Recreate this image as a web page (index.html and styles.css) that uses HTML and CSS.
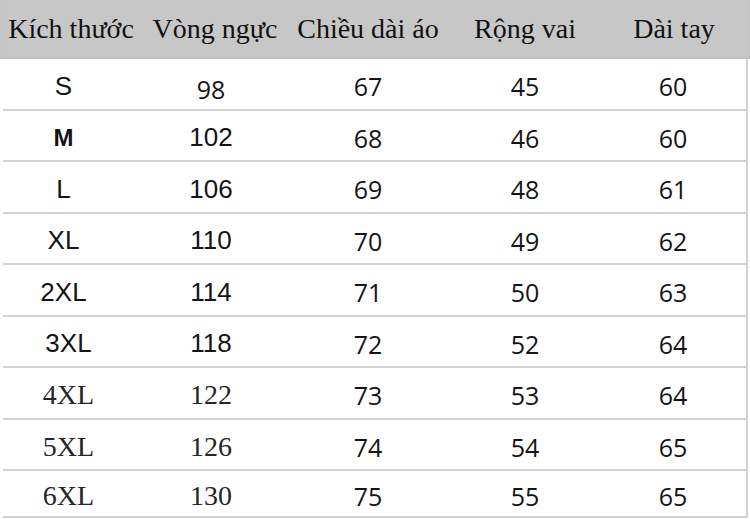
FILE: index.html
```html
<!DOCTYPE html>
<html lang="vi">
<head>
<meta charset="utf-8">
<title>Bảng kích thước</title>
<link rel="stylesheet" href="styles.css">
</head>
<body>
<div class="chart">
  <div class="head">
    <div class="hcell">Kích thước</div>
    <div class="hcell">Vòng ngực</div>
    <div class="hcell">Chiều dài áo</div>
    <div class="hcell">Rộng vai</div>
    <div class="hcell">Dài tay</div>
  </div>
  <div class="body">
    <div class="row">
      <div class="cell f-ar">S</div><div class="cell f-os low">98</div><div class="cell f-os">67</div><div class="cell f-os">45</div><div class="cell f-os">60</div>
    </div>
    <div class="row">
      <div class="cell f-ar bold">M</div><div class="cell f-ar">102</div><div class="cell f-os">68</div><div class="cell f-os">46</div><div class="cell f-os">60</div>
    </div>
    <div class="row">
      <div class="cell f-ar">L</div><div class="cell f-ar">106</div><div class="cell f-os">69</div><div class="cell f-os">48</div><div class="cell f-os">61</div>
    </div>
    <div class="row">
      <div class="cell f-ar">XL</div><div class="cell f-ar">110</div><div class="cell f-os">70</div><div class="cell f-os">49</div><div class="cell f-os">62</div>
    </div>
    <div class="row">
      <div class="cell f-ar">2XL</div><div class="cell f-ar">114</div><div class="cell f-os">71</div><div class="cell f-os">50</div><div class="cell f-os">63</div>
    </div>
    <div class="row">
      <div class="cell f-ar shift">3XL</div><div class="cell f-ar">118</div><div class="cell f-os">72</div><div class="cell f-os">52</div><div class="cell f-os">64</div>
    </div>
    <div class="row">
      <div class="cell f-so shift">4XL</div><div class="cell f-so">122</div><div class="cell f-os">73</div><div class="cell f-os">53</div><div class="cell f-os">64</div>
    </div>
    <div class="row">
      <div class="cell f-so shift">5XL</div><div class="cell f-so">126</div><div class="cell f-os">74</div><div class="cell f-os">54</div><div class="cell f-os">65</div>
    </div>
    <div class="row last">
      <div class="cell f-so shift">6XL</div><div class="cell f-so">130</div><div class="cell f-os">75</div><div class="cell f-os">55</div><div class="cell f-os">65</div>
    </div>
  </div>
</div>
</body>
</html>
```
FILE: styles.css
```css
html, body {
  margin: 0;
  padding: 0;
  background: #ffffff;
}
.chart {
  width: 750px;
  height: 519px;
  overflow: hidden;
  background: #ffffff;
}
.head {
  height: 59px;
  background: #c7c7c7;
  display: grid;
  grid-template-columns: 142px 146px 160px 154px 1fr;
  align-items: center;
  box-shadow: inset 0 -2px 2px rgba(0,0,0,0.04);
}
.hcell {
  font-family: "Liberation Serif", "Times New Roman", serif;
  font-size: 28px;
  color: #111111;
  text-align: center;
  white-space: nowrap;
  padding-bottom: 1px;
}
.hcell:last-child {
  padding-right: 4px;
}
.body {
  margin-left: 3px;
  width: 745px;
  border-right: 2px solid #d4d4d4;
  box-sizing: border-box;
}
.row {
  display: grid;
  grid-template-columns: 121px 174px 140px 174px 1fr;
  height: 51.5px;
  box-sizing: border-box;
  border-bottom: 2px solid #d2d2d2;
}
.row.last {
  height: 46.5px;
}
.cell {
  display: flex;
  align-items: center;
  justify-content: center;
  padding-top: 5px;
  font-size: 25px;
  color: #141414;
  white-space: nowrap;
}
.cell:last-child {
  padding-right: 12px;
}
.f-os {
  font-family: "Open Sans", "Noto Sans", sans-serif;
}
.f-ar {
  font-family: "Liberation Sans", Arial, sans-serif;
  font-size: 26px;
}
.f-so {
  font-family: "Liberation Serif", "Times New Roman", serif;
  font-size: 28px;
  color: #262626;
}
.bold {
  font-weight: 600;
  font-size: 24px;
}
.low {
  padding-top: 10px;
}
.shift {
  padding-left: 10px;
}
```
